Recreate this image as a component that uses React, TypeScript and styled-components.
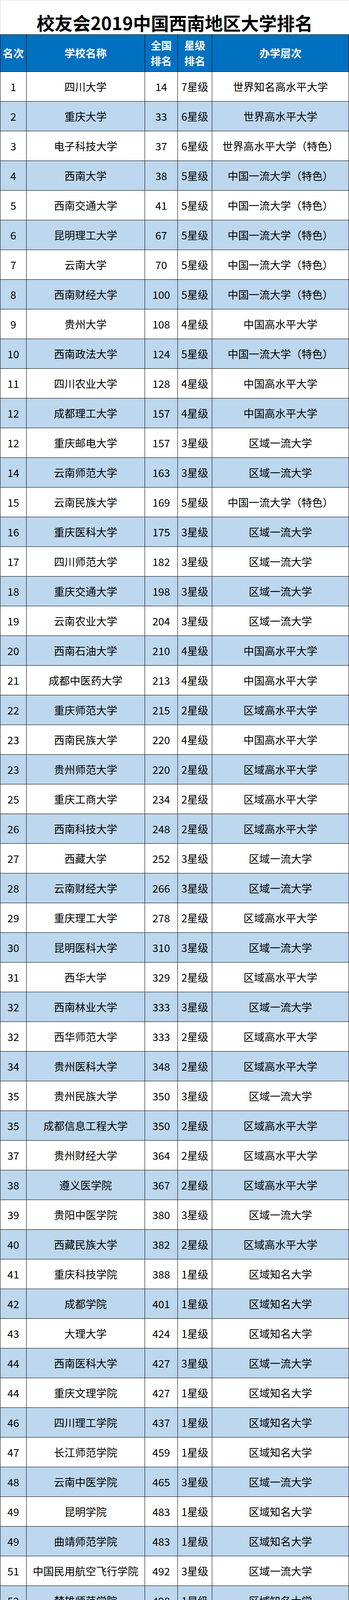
import React from 'react'
import { createGlobalStyle, styled } from 'styled-components'

const GlobalStyle = createGlobalStyle`
  body {
    margin: 0;
    background: #fff;
    font-family: 'Noto Sans CJK SC', 'Microsoft YaHei', sans-serif;
  }
`

const COLUMNS = '67px 303px 84px 88px 350px'

const Page = styled.div`
  width: 893px;
`

const Title = styled.h1`
  box-sizing: border-box;
  height: 88px;
  margin: 0;
  padding-top: 33px;
  border-top: 1px solid #d9d9d9;
  border-left: 1px solid #d9d9d9;
  text-align: center;
  font-size: 46px;
  line-height: 46px;
  font-weight: 700;
  color: #000;
`

const Table = styled.div`
  display: flex;
  flex-direction: column;
  border-top: 1px solid #000;
  border-left: 1px solid #000;
`

const Row = styled.div<{ $shade?: boolean; $head?: boolean }>`
  display: grid;
  grid-template-columns: ${COLUMNS};
  height: ${(p) => (p.$head ? '95px' : '76px')};
  background: ${(p) => (p.$head ? '#0070c0' : p.$shade ? '#bdd7ee' : '#fff')};
  color: ${(p) => (p.$head ? '#fff' : '#000')};
  font-weight: ${(p) => (p.$head ? 700 : 400)};
`

const Cell = styled.div`
  box-sizing: border-box;
  display: flex;
  align-items: center;
  justify-content: center;
  border-right: 1px solid #000;
  border-bottom: 1px solid #000;
  font-size: 27px;
  line-height: 1;
  white-space: nowrap;
`

const HeadCell = styled(Cell)`
  flex-direction: column;
  line-height: 40px;
`

const A = '世界知名高水平大学'
const B = '世界高水平大学'
const B2 = '世界高水平大学（特色）'
const C = '中国一流大学（特色）'
const D = '中国高水平大学'
const E = '区域一流大学'
const F = '区域高水平大学'
const G = '区域知名大学'

type School = [number | null, string, number | null, number, string]

const schools: School[] = [
  [1, '四川大学', 14, 7, A],
  [2, '重庆大学', 33, 6, B],
  [3, '电子科技大学', 37, 6, B2],
  [4, '西南大学', 38, 5, C],
  [5, '西南交通大学', 41, 5, C],
  [6, '昆明理工大学', 67, 5, C],
  [7, '云南大学', 70, 5, C],
  [8, '西南财经大学', 100, 5, C],
  [9, '贵州大学', 108, 4, D],
  [10, '西南政法大学', 124, 5, C],
  [11, '四川农业大学', 128, 4, D],
  [12, '成都理工大学', 157, 4, D],
  [12, '重庆邮电大学', 157, 3, E],
  [14, '云南师范大学', 163, 3, E],
  [15, '云南民族大学', 169, 5, C],
  [16, '重庆医科大学', 175, 3, E],
  [17, '四川师范大学', 182, 3, E],
  [18, '重庆交通大学', 198, 3, E],
  [19, '云南农业大学', 204, 3, E],
  [20, '西南石油大学', 210, 4, D],
  [21, '成都中医药大学', 213, 4, D],
  [22, '重庆师范大学', 215, 2, F],
  [23, '西南民族大学', 220, 4, D],
  [23, '贵州师范大学', 220, 2, F],
  [25, '重庆工商大学', 234, 2, F],
  [26, '西南科技大学', 248, 2, F],
  [27, '西藏大学', 252, 3, E],
  [28, '云南财经大学', 266, 3, E],
  [29, '重庆理工大学', 278, 2, F],
  [30, '昆明医科大学', 310, 3, E],
  [31, '西华大学', 329, 2, F],
  [32, '西南林业大学', 333, 3, E],
  [32, '西华师范大学', 333, 2, F],
  [34, '贵州医科大学', 348, 2, F],
  [35, '贵州民族大学', 350, 3, E],
  [35, '成都信息工程大学', 350, 2, F],
  [37, '贵州财经大学', 364, 2, F],
  [38, '遵义医学院', 367, 2, F],
  [39, '贵阳中医学院', 380, 3, E],
  [40, '西藏民族大学', 382, 2, F],
  [41, '重庆科技学院', 388, 1, G],
  [42, '成都学院', 401, 1, G],
  [43, '大理大学', 424, 1, G],
  [44, '西南医科大学', 427, 3, E],
  [44, '重庆文理学院', 427, 1, G],
  [46, '四川理工学院', 437, 1, G],
  [47, '长江师范学院', 459, 1, G],
  [48, '云南中医学院', 465, 3, E],
  [49, '昆明学院', 483, 1, G],
  [49, '曲靖师范学院', 483, 1, G],
  [51, '中国民用航空飞行学院', 492, 3, E],
  [52, '楚雄师范学院', 498, 1, G],
  [52, '乐山师范学院', 498, 1, G],
  [52, '重庆三峡学院', 498, 1, G],
  [55, '遵义师范学院', 508, 1, G],
  [56, '成都工业学院', 513, 1, G],
  [57, '玉溪师范学院', 519, 1, G],
  [58, '贵州师范学院', 523, 1, G],
  [58, '宜宾学院', 523, 1, G],
  [60, '川北医学院', 533, 2, F],
  [61, '成都医学院', 541, 1, G],
  [62, '内江师范学院', 557, 1, G],
  [63, '红河学院', 584, 1, G],
  [64, '贵阳学院', 604, 1, G],
  [64, '贵州理工学院', 604, 1, G],
  [64, '攀枝花学院', 604, 1, G],
  [67, '绵阳师范学院', 613, 1, G],
  [68, '安顺学院', 625, 1, G],
  [68, '凯里学院', 625, 1, G],
  [68, '黔南民族师范学院', 625, 1, G],
  [71, '成都师范学院', 651, 1, G],
  [71, '铜仁学院', 651, 1, G],
  [73, '西藏藏医学院', 658, 3, E],
  [73, '重庆第二师范学院', 658, 1, G],
  [75, '兴义民族师范学院', 665, 1, G],
  [76, '四川文理学院', 669, 1, G],
  [76, '西昌学院', 669, 1, G],
  [78, '文山学院', 680, 1, G],
  [79, '四川旅游学院', 689, 1, G],
  [80, '保山学院', 691, 1, G],
  [80, '六盘水师范学院', 691, 1, G],
  [82, '四川民族学院', 693, 2, F],
  [82, '普洱学院', 693, 1, G],
  [84, '滇西应用技术大学', 697, 1, G],
  [85, '西藏农牧学院', 699, 3, E],
  [86, '贵州工程应用技术学院', 700, 1, G],
  [87, '贵州商学院', 708, 1, G],
  [88, '阿坝师范学院', 713, 1, G],
  [88, '滇西科技师范学院', 713, 1, G],
  [90, '昭通学院', 723, 1, G],
  [null, '陆军军医大学', null, 6, B2],
  [null, '成都体育学院', null, 4, D],
  [null, '四川美术学院', null, 4, D],
  [null, '四川音乐学院', null, 4, D],
  [null, '四川警察学院', null, 3, E],
  [null, '四川外国语大学', null, 3, E],
  [null, '云南警官学院', null, 3, E],
  [null, '云南艺术学院', null, 3, E],
  [null, '贵州警察学院', null, 2, F],
  [null, '重庆警察学院', null, 2, F],
]

export default function App() {
  return (
    <Page>
      <GlobalStyle />
      <Title>校友会2019中国西南地区大学排名</Title>
      <Table>
        <Row $head>
          <HeadCell>名次</HeadCell>
          <HeadCell>学校名称</HeadCell>
          <HeadCell>
            <span>全国</span>
            <span>排名</span>
          </HeadCell>
          <HeadCell>
            <span>星级</span>
            <span>排名</span>
          </HeadCell>
          <HeadCell>办学层次</HeadCell>
        </Row>
        {schools.map(([rank, name, national, stars, level], i) => (
          <Row key={name} $shade={i % 2 === 1}>
            <Cell>{rank ?? ''}</Cell>
            <Cell>{name}</Cell>
            <Cell>{national ?? ''}</Cell>
            <Cell>{stars}星级</Cell>
            <Cell>{level}</Cell>
          </Row>
        ))}
      </Table>
    </Page>
  )
}
